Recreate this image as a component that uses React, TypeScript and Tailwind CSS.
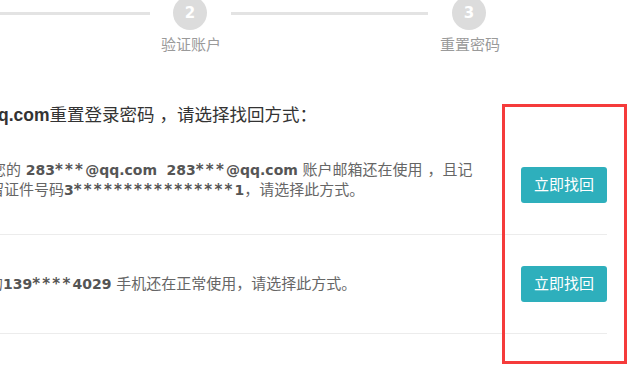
import React from "react";

const font = {
  fontFamily: '"DejaVu Sans", "Noto Sans CJK SC", sans-serif',
};

const titleFont = {
  fontFamily: '"Liberation Sans", "Noto Sans CJK SC", sans-serif',
};

// Bold masked value; asterisks in the source font sit wider apart.
function Masked({ value }: { value: string }) {
  const parts = value.split(/(\*+)/).filter(Boolean);
  return (
    <span className="text-[14px] font-bold text-[#555]">
      {parts.map((p, i) =>
        p.startsWith("*") ? (
          <span key={i} className="text-[15px] tracking-[2.2px]">
            {p}
          </span>
        ) : (
          <span key={i}>{p}</span>
        )
      )}
    </span>
  );
}

function StepCircle({ n }: { n: number }) {
  return (
    <div className="flex h-[34px] w-[34px] shrink-0 items-center justify-center rounded-full bg-[#dcdcdc] text-[15px] font-bold text-white">
      {n}
    </div>
  );
}

function RecoverButton() {
  return (
    <button
      type="button"
      className="h-[36px] w-[86px] shrink-0 rounded-[3px] bg-[#2eafbc] text-[15px] text-white"
    >
      立即找回
    </button>
  );
}

export default function App() {
  return (
    <div className="relative h-[381px] w-[636px] overflow-hidden bg-white" style={font}>
      {/* steps */}
      <div className="mt-[-4px] flex h-[34px] items-center">
        <div className="h-[3px] w-[150px] bg-[#e3e3e3]" />
        <div className="ml-[23px]">
          <StepCircle n={2} />
        </div>
        <div className="ml-[24px] h-[3px] w-[197px] bg-[#e3e3e3]" />
        <div className="ml-[24px]">
          <StepCircle n={3} />
        </div>
      </div>
      <div className="mt-[5px] flex text-[15px] leading-[20px] text-[#9a9a9a]">
        <div className="ml-[150px] w-[82px] text-center">验证账户</div>
        <div className="ml-[197px] w-[82px] text-center">重置密码</div>
      </div>

      {/* title */}
      <div className="mt-[48px] ml-[-2px] text-[17.5px] leading-[24px] text-[#333]" style={titleFont}>
        <span className="font-bold">q.com</span>重置登录密码 ，请选择找回方式：
      </div>

      {/* options */}
      <div className="mt-[9px] w-[607px]">
        <div className="flex h-[99px] items-center justify-between border-b border-[#ececec]">
          <div className="mt-[-10px] text-[15px] leading-[20px] text-[#666]">
            <div className="ml-[-9px]">
              您的 <Masked value="283***@qq.com" />&nbsp;{" "}
              <Masked value="283***@qq.com" /> 账户邮箱还在使用 ，且记
            </div>
            <div className="ml-[-11px]">
              留证件号码<Masked value="3****************1" />，请选择此方式。
            </div>
          </div>
          <RecoverButton />
        </div>
        <div className="flex h-[99px] items-center justify-between border-b border-[#ececec]">
          <div className="ml-[-12px] text-[15px] leading-[20px] text-[#666]">
            的<Masked value="139****4029" /> 手机还在正常使用，请选择此方式。
          </div>
          <RecoverButton />
        </div>
      </div>

      {/* annotation box */}
      <div className="absolute left-[502px] top-[104px] h-[260px] w-[125px] border-[3px] border-[#f53b3b]" />
    </div>
  );
}
